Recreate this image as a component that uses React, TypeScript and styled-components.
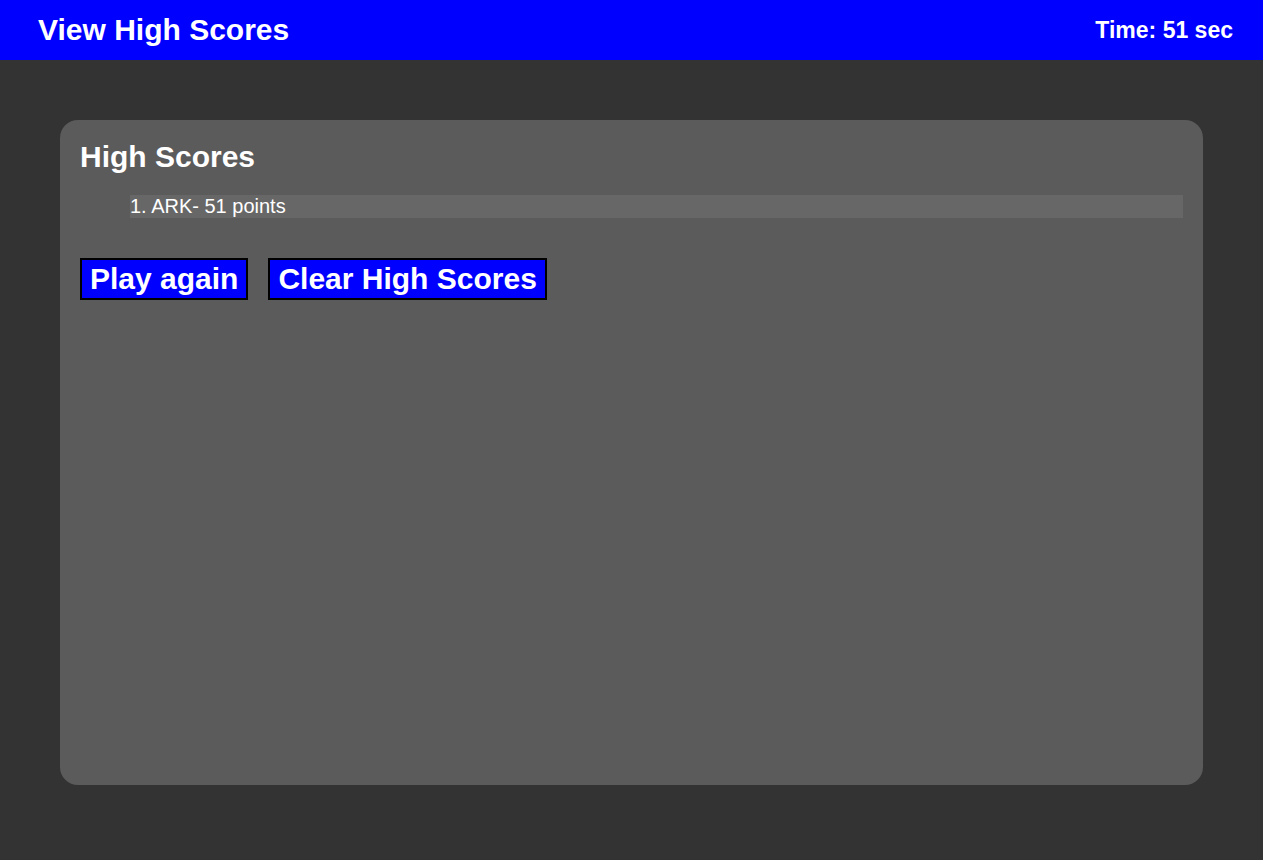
import styled, { createGlobalStyle } from "styled-components";

const GlobalStyle = createGlobalStyle`
  html, body {
    margin: 0;
    padding: 0;
    background: #333333;
    font-family: "Liberation Sans", Arial, sans-serif;
    color: #ffffff;
  }
`;

const Header = styled.header`
  display: flex;
  align-items: center;
  justify-content: space-between;
  height: 60px;
  padding: 0 30px 0 38px;
  background: #0000ff;
`;

const Title = styled.h1`
  margin: 0;
  font-size: 30px;
  font-weight: bold;
`;

const Timer = styled.div`
  font-size: 23px;
  font-weight: bold;
`;

const Main = styled.main`
  padding: 60px 60px 75px;
`;

const Card = styled.section`
  box-sizing: border-box;
  height: 665px;
  padding: 20px;
  border-radius: 18px;
  background: #5b5b5b;
`;

const CardTitle = styled.h2`
  margin: 0;
  font-size: 30px;
  line-height: 34px;
  font-weight: bold;
`;

const ScoreList = styled.ol`
  list-style: none;
  margin: 21px 0 40px;
  padding: 0 0 0 50px;
`;

const ScoreItem = styled.li`
  background: #676767;
  font-size: 20px;
  line-height: 23px;
`;

const Actions = styled.div`
  display: flex;
  gap: 20px;
`;

const Button = styled.button`
  height: 42px;
  padding: 0 8px;
  border: 2px solid #000000;
  background: #0000ff;
  color: #ffffff;
  font-family: "Liberation Sans", Arial, sans-serif;
  font-size: 30px;
  font-weight: bold;
  cursor: pointer;
`;

export default function App() {
  return (
    <>
      <GlobalStyle />
      <Header>
        <Title>View High Scores</Title>
        <Timer>Time: 51 sec</Timer>
      </Header>
      <Main>
        <Card>
          <CardTitle>High Scores</CardTitle>
          <ScoreList>
            <ScoreItem>1. ARK- 51 points</ScoreItem>
          </ScoreList>
          <Actions>
            <Button>Play again</Button>
            <Button>Clear High Scores</Button>
          </Actions>
        </Card>
      </Main>
    </>
  );
}
